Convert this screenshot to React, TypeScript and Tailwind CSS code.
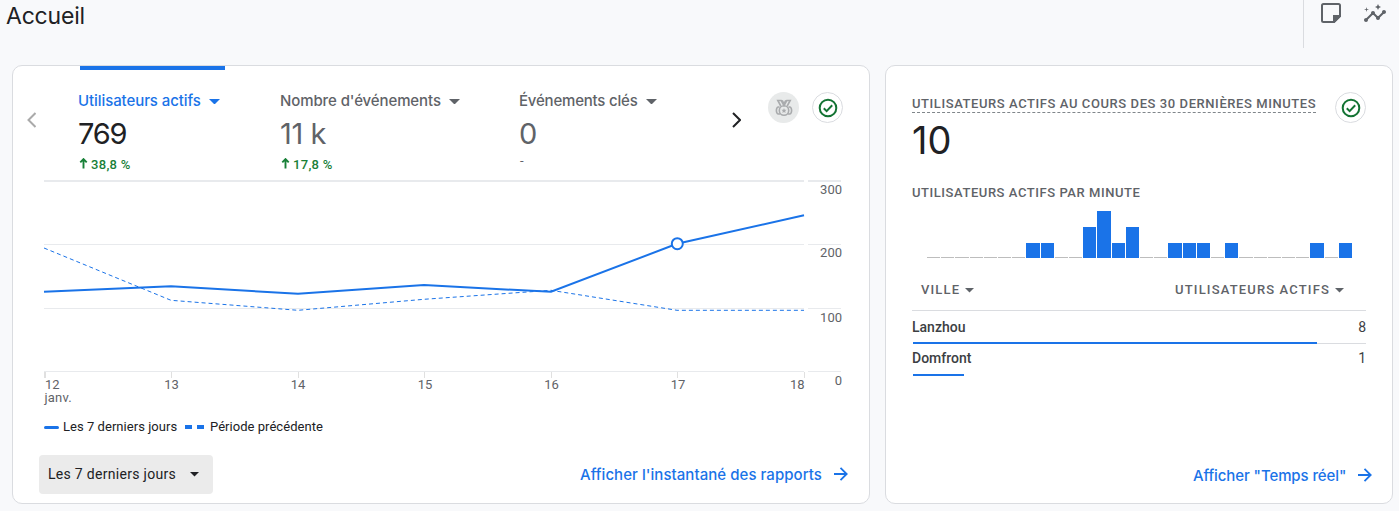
import React from 'react';

interface Metric {
  label: string;
  value: string;
  delta: string | null;
  active?: boolean;
  column: string;
  labelClass: string;
  valueClass: string;
}

const metrics: Metric[] = [
  { label: 'Utilisateurs actifs', value: '769', delta: '38,8 %', active: true, column: 'w-[202px]', labelClass: 'w-[123px] tracking-[-0.08px]', valueClass: 'tracking-[-1.2px]' },
  { label: "Nombre d'événements", value: '11 k', delta: '17,8 %', column: 'w-[239px]', labelClass: 'w-[161px] tracking-[-0.1px]', valueClass: 'tracking-[-0.4px]' },
  { label: 'Événements clés', value: '0', delta: null, column: 'w-[198px]', labelClass: 'w-[119px] tracking-[-0.2px]', valueClass: 'tracking-[-1px]' },
];

const days = [
  { label: '12', x: 45, textX: 45, anchor: 'start' },
  { label: '13', x: 171.5, textX: 171.5, anchor: 'middle' },
  { label: '14', x: 298.5, textX: 298, anchor: 'middle' },
  { label: '15', x: 424.5, textX: 425, anchor: 'middle' },
  { label: '16', x: 551.5, textX: 551.5, anchor: 'middle' },
  { label: '17', x: 677.5, textX: 678, anchor: 'middle' },
  { label: '18', x: 804.5, textX: 804.5, anchor: 'end' },
] as const;

const minutes = [0, 0, 0, 0, 0, 0, 0, 1, 1, 0, 0, 2, 3, 1, 2, 0, 0, 1, 1, 1, 0, 1, 0, 0, 0, 0, 0, 1, 0, 1];

const Caret = ({ className = '', width = 10 }: { className?: string; width?: number }) => (
  <svg width={width} height={width / 2} viewBox="0 0 10 5" fill="currentColor" className={`shrink-0 ${className}`}>
    <path d="M0 0h10L5 5z" />
  </svg>
);

const ArrowRight = () => (
  <svg width="14" height="14" viewBox="0 0 14 14" fill="none" stroke="currentColor" strokeWidth="1.8" className="mb-[3px] shrink-0">
    <path d="M0 7h12.5M6.5 .8L12.7 7l-6.2 6.2" />
  </svg>
);

const CheckBadge = () => (
  <div className="flex size-[31px] shrink-0 items-center justify-center rounded-full border border-[#dadce0] text-[#137333]">
    <svg width="20" height="20" viewBox="0 0 20 20" fill="none" stroke="currentColor" strokeWidth="2">
      <circle cx="10" cy="10" r="8.3" />
      <path d="M5.8 10.3l2.8 2.8 5.6-5.8" />
    </svg>
  </div>
);

const MedalBadge = () => (
  <div className="flex size-[31px] items-center justify-center rounded-full bg-[#e8eaea] text-[#a9abad]">
    <svg width="18" height="18" viewBox="0 0 18 18" fill="none" stroke="currentColor" strokeWidth="1.6">
      <path d="M5.8 7L2.8 1.500h3.400L9 6.500l2.800-5h3.400L12.200 7M7.200 1.500L9 4.800l1.800-3.300" />
      <circle cx="9" cy="11.5" r="4.7" />
      <path d="M4.500 8H3.200Q1.400 8.500 1.400 11.500t1.800 3.500h1.800M13.500 8h1.300q1.800.5 1.800 3.500T14.800 15H13" />
      <path d="M9 9l.7 1.700 1.900.1-1.400 1.200.4 1.900L9 12.900l-1.600 1 .4-1.900-1.400-1.200 1.900-.1z" fill="currentColor" stroke="none" />
    </svg>
  </div>
);

const MetricTab = ({ metric }: { metric: Metric }) => (
  <div className={`${metric.column} ${metric.active ? 'text-[#1a73e8]' : 'text-[#5f6368]'}`}>
    <div className={`ml-px h-1 w-[145px] ${metric.active ? 'bg-[#1a73e8]' : ''}`} />
    <div className="mt-[21px] flex h-5 items-center">
      <span className={`-ml-px whitespace-nowrap [font-family:Inter,sans-serif] text-[15px] font-medium ${metric.labelClass}`}>
        {metric.label}
      </span>
      <Caret className="ml-2 mt-px" width={11} />
    </div>
    <div className={`-ml-px mt-[7px] h-8 whitespace-nowrap [font-family:Inter,sans-serif] text-[29px] leading-8 ${metric.valueClass} ${metric.active ? 'text-[#202124]' : ''}`}>
      {metric.value}
    </div>
    {metric.delta ? (
      <div className="mt-[7px] flex h-4 items-center text-[13px] font-medium tracking-[0.3px] text-[#188038]">
        <svg width="9" height="11" viewBox="0 0 9 11" fill="none" stroke="currentColor" strokeWidth="1.9" className="mb-[3px] mr-[3px]">
          <path d="M4.5 10.5V1.5M1.300 4.300l3.200-3.200 3.200 3.200" />
        </svg>
        {metric.delta}
      </div>
    ) : (
      <div className="mt-[3px] h-4 text-[13px] leading-4">-</div>
    )}
  </div>
);

const TrendChart = () => (
  <svg width="818" height="227" viewBox="36 180 818 227" className="ml-[23px] block shrink-0 text-[13px]">
    <path d="M44 181h760M808 181h33" stroke="#e8eaed" strokeWidth="2" />
    <path d="M44 244.5h760M808 244.5h33M44 308.5h760M808 308.5h33M44 371.5h760M808 371.5h33" stroke="#e8eaed" />
    {days.map((day) => (
      <g key={day.label}>
        <path d={`M${day.x} 372v6`} stroke="#e0e0e0" strokeWidth={day.label === '12' ? 2 : 1} />
        <text x={day.textX} y={389} textAnchor={day.anchor} fill="#5f6368">{day.label}</text>
      </g>
    ))}
    <text x="44.5" y="402" fill="#5f6368" letterSpacing="0.2">janv.</text>
    <g fill="#5f6368" textAnchor="end">
      <text x="842" y="194">300</text>
      <text x="842" y="257">200</text>
      <text x="842" y="322">100</text>
      <text x="842" y="385">0</text>
    </g>
    <polyline points="44,248 171,300.3 298,310.3 424,299.3 551,290.3 677,310.3 804,310.3" fill="none" stroke="#1a73e8" strokeDasharray="4 3" />
    <polyline points="44,291.8 171,286.2 298,293.8 424,285.1 551,291.8 677,243.8 804,215.3" fill="none" stroke="#1a73e8" strokeWidth="2" />
    <circle cx="677.3" cy="243.7" r="5.5" fill="#fff" stroke="#1a73e8" strokeWidth="2" />
  </svg>
);

const MinuteBars = () => (
  <div className="flex h-[48px] w-[426px] items-end">
    {minutes.map((count, i) => (
      <div key={i} className="flex-1 pr-px">
        <div
          className={count ? 'bg-[#1a73e8]' : 'bg-[#bdbdbd]'}
          style={{ height: count ? count * 16 - 1 : 1 }}
        />
      </div>
    ))}
  </div>
);

const OverviewCard = () => (
  <section className="flex h-[439px] w-[858px] shrink-0 flex-col rounded-[10px] border border-[#dadce0] bg-white">
    <div className="flex h-[114px] shrink-0">
      <svg width="9" height="16" viewBox="0 0 9 16" fill="none" stroke="#aaa" strokeWidth="2" className="ml-[14px] mt-[46px]">
        <path d="M8.5 1L1.5 8l7 7" />
      </svg>
      <div className="ml-[43px] flex">
        {metrics.map((metric) => <MetricTab key={metric.label} metric={metric} />)}
      </div>
      <svg width="9" height="16" viewBox="0 0 9 16" fill="none" stroke="#202124" strokeWidth="2" className="ml-[14px] mt-[46px]">
        <path d="M1 1l7 7-7 7" />
      </svg>
      <div className="ml-[27px] mt-[26px] flex gap-[13px]">
        <MedalBadge />
        <CheckBadge />
      </div>
    </div>
    <TrendChart />
    <div className="ml-[31px] mt-[11px] flex h-[18px] items-center text-[13px] tracking-[0.04px] text-[#202124]">
      <span className="h-[3px] w-[15px] rounded-full bg-[#1a73e8]" />
      <span className="ml-1 w-[114px] whitespace-nowrap">Les 7 derniers jours</span>
      <span className="ml-[8px] h-1 w-[7px] bg-[#1a73e8]" />
      <span className="ml-[5px] h-1 w-[7px] bg-[#1a73e8]" />
      <span className="ml-[6px]">Période précédente</span>
    </div>
    <div className="mt-[19px] flex items-center justify-between pl-[26px] pr-[21px]">
      <button className="flex h-[39px] w-[174px] items-center rounded bg-[#ebebeb] pl-[9px] text-[14px] tracking-[0.3px] text-[#202124]">
        <span className="w-[142px] whitespace-nowrap text-left">Les 7 derniers jours</span>
        <Caret width={9} />
      </button>
      <a className="flex items-center gap-[12px] pt-px text-[#1a73e8]">
        <span className="w-[242px] whitespace-nowrap [font-family:Inter,sans-serif] text-[15px] font-medium leading-5 tracking-[0.05px]">
          Afficher l'instantané des rapports
        </span>
        <ArrowRight />
      </a>
    </div>
  </section>
);

const RealtimeCard = () => (
  <section className="flex h-[439px] w-[508px] shrink-0 flex-col rounded-[10px] border border-[#dadce0] bg-white pl-[26px] pr-[26px] text-[#5f6368]">
    <div className="mt-[26px] flex h-[31px] shrink-0">
      <h2 className="mt-[4px] h-[17px] w-[404px] shrink-0 whitespace-nowrap border-b border-dashed border-[#80868b] text-[13px] font-medium leading-4 tracking-[0.58px]">
        UTILISATEURS ACTIFS AU COURS DES 30 DERNIÈRES MINUTES
      </h2>
      <div className="ml-[19px]"><CheckBadge /></div>
    </div>
    <div className="h-[40px] whitespace-nowrap [font-family:Inter,sans-serif] text-[38px] leading-[34px] text-[#202124]">10</div>
    <h3 className="mt-[22px] text-[13px] font-medium leading-4 tracking-[0.56px]">UTILISATEURS ACTIFS PAR MINUTE</h3>
    <div className="ml-[15px] mt-[9px]"><MinuteBars /></div>
    <div className="mt-[24px] flex h-4 items-center justify-between pl-[9px] pr-[22px] text-[13px] font-medium tracking-[1.15px]">
      <span className="flex items-center gap-[5px]">VILLE <Caret className="mt-px" width={9} /></span>
      <span className="flex items-center gap-[5px]">UTILISATEURS ACTIFS <Caret className="mt-px" width={9} /></span>
    </div>
    <div className="mt-[12px] h-px w-[454px] shrink-0 bg-[#dadce0]" />
    <div className="flex h-[31px] w-[454px] shrink-0 items-center justify-between pt-[2px] text-[14px] text-[#3c4043]">
      <span className="font-medium">Lanzhou</span>
      <span>8</span>
    </div>
    <div className="flex h-[2px] w-[454px] shrink-0 pl-px">
      <div className="h-[2px] w-[404px] bg-[#1a73e8]" />
      <div className="mt-px h-px flex-1 bg-[#dadce0]" />
    </div>
    <div className="flex h-[30px] w-[454px] shrink-0 items-center justify-between pb-[2px] text-[14px] text-[#3c4043]">
      <span className="font-medium">Domfront</span>
      <span>1</span>
    </div>
    <div className="ml-px h-[2px] w-[51px] shrink-0 bg-[#1a73e8]" />
    <a className="-mr-[6px] mt-[90px] flex items-center justify-end gap-[12px] text-[#1a73e8]">
      <span className="w-[153px] whitespace-nowrap [font-family:Inter,sans-serif] text-[15px] font-medium leading-5 tracking-[-0.1px]">
        Afficher "Temps réel"
      </span>
      <ArrowRight />
    </a>
  </section>
);

const Header = () => (
  <header className="flex h-[65px] items-start justify-between pl-[6px] pr-[12px] text-[#202124]">
    <h1 className="[font-family:Inter,sans-serif] text-[23px] leading-8 tracking-[-0.2px]">Accueil</h1>
    <div className="flex h-[48px] border-l border-[#dadce0] pl-[17px] text-[#5f6368]">
      <svg width="20" height="20" viewBox="0 0 20 20" fill="none" stroke="currentColor" strokeWidth="2" className="mt-[3px]">
        <path d="M2.500 1h15q1.500 0 1.500 1.500V13l-6 6H2.500Q1 19 1 17.500v-15Q1 1 2.500 1z" />
        <path d="M13 19v-6h6z" fill="currentColor" />
      </svg>
      <svg width="24" height="24" viewBox="0 0 24 24" fill="currentColor" className="ml-[22px] mt-[4px]">
        <path d="M21 6c-1.450 0-2.260 1.440-1.930 2.510l-3.550 3.560c-.3-.09-.74-.09-1.040 0l-2.550-2.550C12.270 8.450 11.460 7 10 7c-1.450 0-2.270 1.440-1.930 2.520l-4.560 4.550C2.440 13.740 1 14.550 1 16c0 1.100.9 2 2 2 1.450 0 2.260-1.440 1.930-2.510l4.550-4.560c.3.090.74.090 1.040 0l2.550 2.550C12.730 14.550 13.540 16 15 16c1.450 0 2.270-1.440 1.930-2.520l3.560-3.550C21.560 10.260 23 9.450 23 8c0-1.100-.9-2-2-2zM15 6l.94-2.070L18 3l-2.060-.93L15 0l-.92 2.070L12 3l2.080.93zM3.500 8L4 6l2-.5L4 5l-.5-2L3 5l-2 .5L3 6z" />
      </svg>
    </div>
  </header>
);

const App: React.FC = () => (
  <div className="h-[511px] w-[1399px] overflow-hidden bg-[#f8f9fb] font-['Roboto',sans-serif]">
    <Header />
    <main className="flex gap-[15px] pl-[12px]">
      <OverviewCard />
      <RealtimeCard />
    </main>
  </div>
);

export default App;
